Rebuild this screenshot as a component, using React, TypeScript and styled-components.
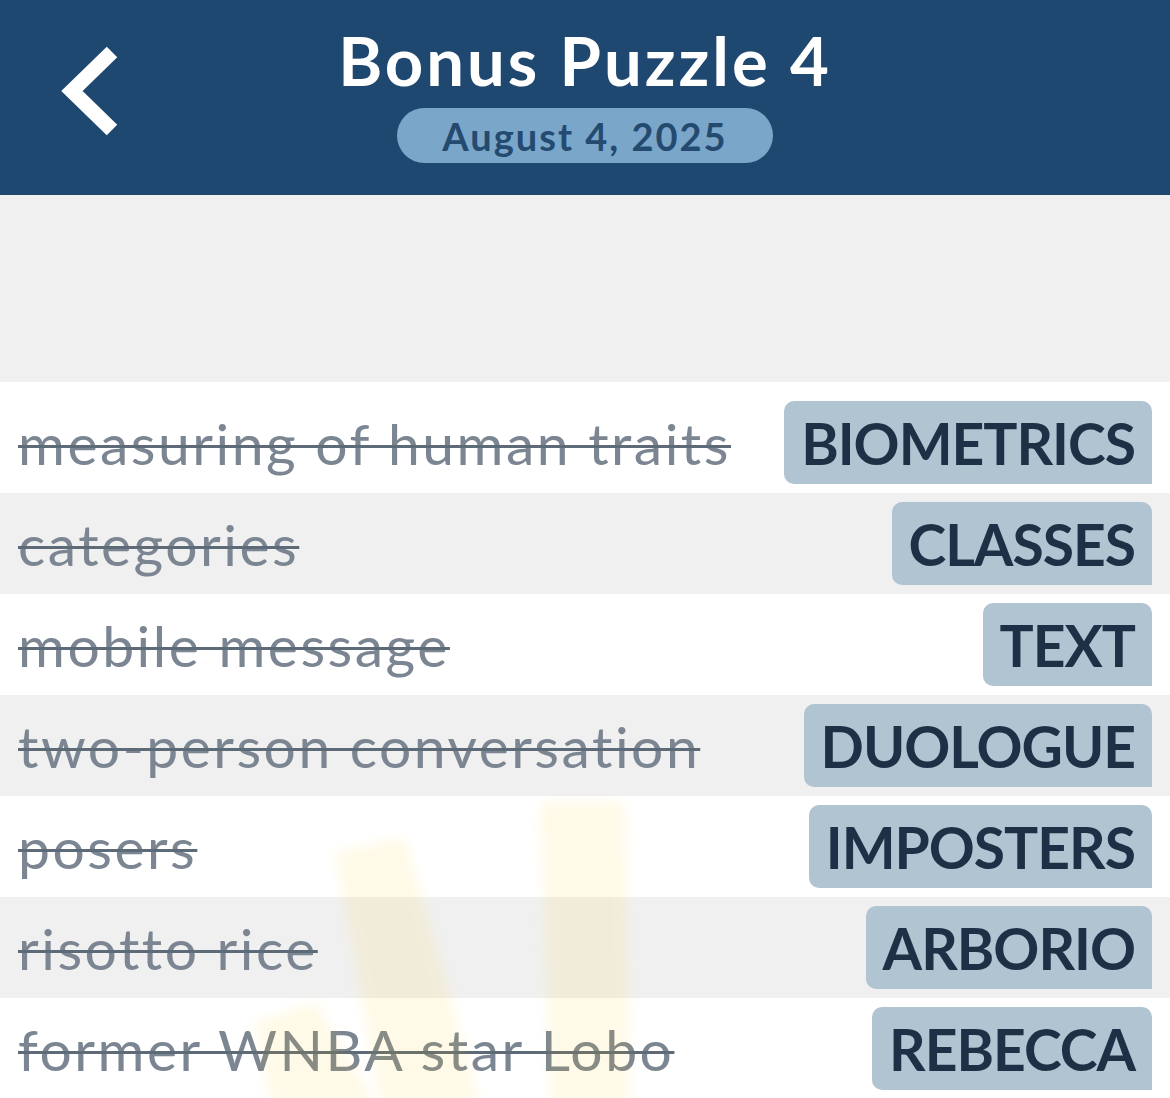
import React from 'react';
import styled, {createGlobalStyle} from "styled-components";

const GlobalStyle = createGlobalStyle`
  html, body {
    margin: 0;
    padding: 0;
    background: #f0f0f0;
  }
  body {
    font-family: "Lato", "Open Sans", sans-serif;
  }
`;

const Page = styled.div`
  width: 1170px;
  height: 1098px;
  overflow: hidden;
  display: flex;
  flex-direction: column;
`;

const Header = styled.header`
  height: 195px;
  flex-shrink: 0;
  background: #1f4870;
  display: grid;
  grid-template-columns: 1fr auto 1fr;
  align-items: start;
`;

const BackButton = styled.button`
  justify-self: start;
  margin: 44px 0 0 54px;
  padding: 0;
  border: none;
  background: transparent;
  width: 70px;
  height: 94px;
  cursor: pointer;
`;

const TitleBlock = styled.div`
  display: flex;
  flex-direction: column;
  align-items: center;
  padding-top: 20px;
`;

const Title = styled.h1`
  margin: 0;
  font-family: "Lato", sans-serif;
  font-weight: 700;
  font-size: 67px;
  line-height: 80px;
  color: #ffffff;
  letter-spacing: 3px;
`;

const DatePill = styled.div`
  margin-top: 8px;
  height: 55px;
  padding: 0 45px;
  border-radius: 28px;
  background: #7aa6c9;
  color: #244a70;
  font-family: "Lato", sans-serif;
  font-weight: 700;
  font-size: 38px;
  display: flex;
  align-items: center;
  letter-spacing: 2px;
`;

const Spacer = styled.div`
  height: 187px;
  flex-shrink: 0;
  background: #f0f0f0;
`;

const List = styled.div`
  position: relative;
  flex: 1;
  background: #ffffff;
  padding-top: 10px;
`;

const Row = styled.div<{ $shaded: boolean }>`
  height: 101px;
  display: flex;
  align-items: center;
  justify-content: space-between;
  padding: 0 18px;
  background: ${({$shaded}) => $shaded ? "#f0f0f0" : "#ffffff"};
`;

const Clue = styled.span`
  font-family: "Lato", sans-serif;
  font-weight: 400;
  font-size: 57px;
  letter-spacing: 2.5px;
  color: #7c8692;
  text-decoration: line-through;
  text-decoration-color: #5d6a78;
  text-decoration-thickness: 3px;
  white-space: nowrap;
  position: relative;
  z-index: 1;
`;

const Answer = styled.span`
  height: 83px;
  padding: 0 17px;
  display: flex;
  align-items: center;
  border-radius: 10px 10px 0 10px;
  background: #b1c4d2;
  color: #1d3045;
  font-family: "Lato", sans-serif;
  font-weight: 700;
  font-size: 57px;
  letter-spacing: -1px;
  position: relative;
  z-index: 1;
`;

const Watermark = styled.svg`
  position: absolute;
  left: 240px;
  top: 420px;
  width: 500px;
  height: 300px;
  pointer-events: none;
  opacity: 0.09;
  filter: blur(6px);
  z-index: 2;
`;

const words = [
    {clue: "measuring of human traits", answer: "BIOMETRICS"},
    {clue: "categories", answer: "CLASSES"},
    {clue: "mobile message", answer: "TEXT"},
    {clue: "two-person conversation", answer: "DUOLOGUE"},
    {clue: "posers", answer: "IMPOSTERS"},
    {clue: "risotto rice", answer: "ARBORIO"},
    {clue: "former WNBA star Lobo", answer: "REBECCA"},
];

const App = () => {
    return (
        <Page>
            <GlobalStyle/>
            <Header>
                <BackButton aria-label="Back">
                    <svg width="70" height="94" viewBox="0 0 70 94">
                        <polyline points="58,8 18,47 58,86" fill="none" stroke="#ffffff" strokeWidth="15"
                                  strokeLinejoin="miter" strokeLinecap="butt"/>
                    </svg>
                </BackButton>
                <TitleBlock>
                    <Title>Bonus Puzzle 4</Title>
                    <DatePill>August 4, 2025</DatePill>
                </TitleBlock>
                <div/>
            </Header>
            <Spacer/>
            <List>
                {words.map((w, index) => (
                    <Row key={w.answer} $shaded={index % 2 === 1}>
                        <Clue>{w.clue}</Clue>
                        <Answer>{w.answer}</Answer>
                    </Row>
                ))}
                <Watermark viewBox="0 0 500 300">
                    <polygon points="95,50 165,35 240,300 140,300" fill="#ffcc00"/>
                    <polygon points="300,0 385,0 390,300 310,300" fill="#ffcc00"/>
                    <polygon points="15,220 75,200 135,300 30,300" fill="#ffcc00"/>
                </Watermark>
            </List>
        </Page>
    );
};

export default App;
